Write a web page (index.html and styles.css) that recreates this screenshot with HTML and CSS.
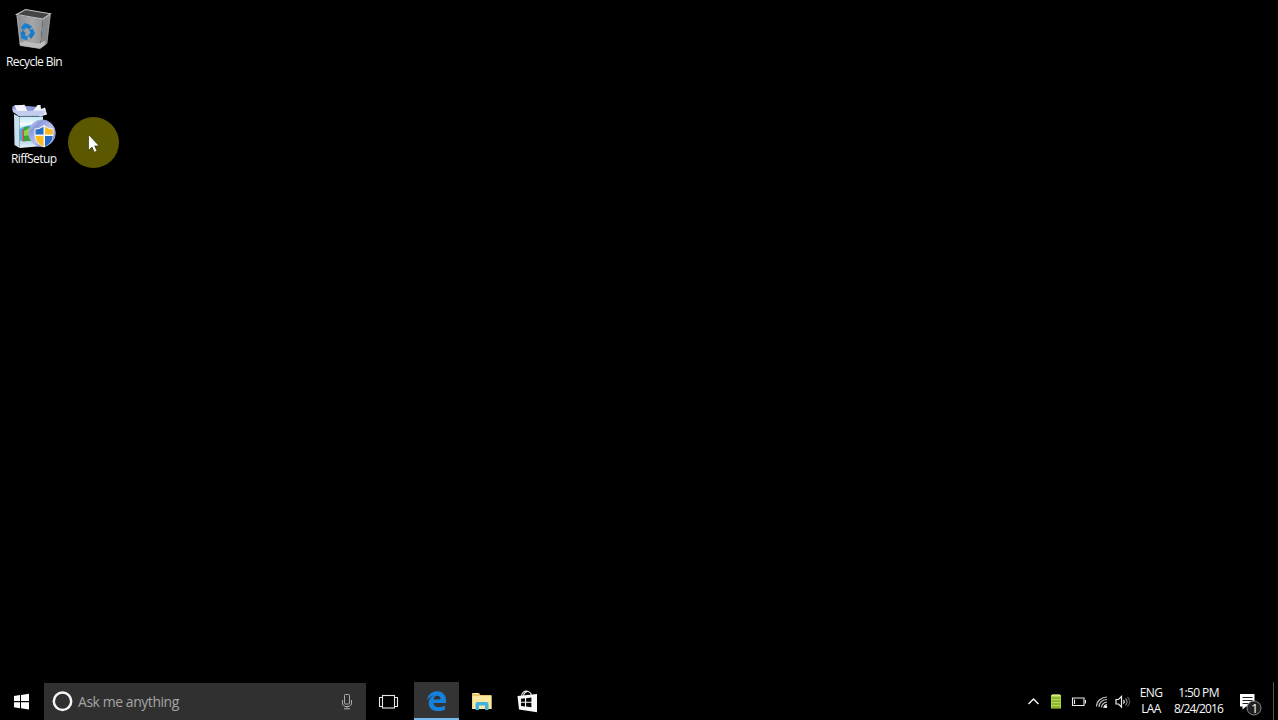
FILE: index.html
```html
<!DOCTYPE html>
<html lang="en">
<head>
<meta charset="utf-8">
<title>Desktop</title>
<link rel="stylesheet" href="styles.css">
</head>
<body>
<main class="desktop">
  <div class="shortcut recycle">
    <svg width="48" height="48" viewBox="10 4 48 48">
      <defs><linearGradient id="bin" x1="0" x2="1"><stop offset="0" stop-color="#8b8d91"/><stop offset=".6" stop-color="#a5a6a8"/><stop offset="1" stop-color="#919395"/></linearGradient></defs>
      <path d="M16.5 15 43 19l-3 29.5-20-3z" fill="url(#bin)"/>
      <path d="m43 19 7.500-5-3.600 29.500L40 48.500z" fill="#88898c"/>
      <path d="m19.500 43 6-2 8 2 6 .5 6-3-1 5-4.500 3-19.700-3z" fill="#bcbcbd"/>
      <path d="m16.500 14.500 9-5 25 4.300L43 19z" fill="#434446" stroke="#c4c5c7" stroke-width="1.100"/>
      <path d="m17 15.500 3.300 30 19.700 3 6.900-5 3.400-29" fill="none" stroke="#b4b5b7" stroke-width=".7"/>
      <g fill="none" stroke="#167fd0" stroke-width="4"><path d="m22.300 29 3-3.600 3.600 1.300"/><path d="m31 29.300 1.700 4-2.200 3"/><path d="m27.500 38.300-4.300-1.400-.5-4.500"/></g>
      <path d="m26.800 24.500 5.400 1.700-3.200 3.900zM33.800 33l-2.400 6-3.400-3.500zM20.300 33.700l2.600-3.800 3 4z" fill="#1879c2"/>
    </svg>
    <span class="label recycle-label">Recycle Bin</span>
  </div>
  <div class="shortcut setup">
    <svg width="50" height="52" viewBox="8 100 50 52">
      <defs>
        <linearGradient id="box" x2="0" y2="1"><stop stop-color="#bce7f8"/><stop offset=".25" stop-color="#f7fcff"/><stop offset=".55" stop-color="#70c5ec"/><stop offset="1" stop-color="#edf3f6"/></linearGradient>
        <linearGradient id="disc" x2="1" y2="1"><stop stop-color="#eef0ff"/><stop offset=".25" stop-color="#8b99da"/><stop offset=".55" stop-color="#bbc2ee"/><stop offset="1" stop-color="#4c5595"/></linearGradient>
      </defs>
      <path d="m12 107 3-2 24 2 5 5-4 4H18z" fill="#8b98d9"/>
      <path d="m14.500 105.500 10-.7 3 6.500H17zM33 111l4.500-6h3l.5 4 4-1.500 2 7-7 2z" fill="#f2f3fc"/>
      <path d="m12 108 6 3 28-.5-3 5-24 .5-6-4z" fill="#c3cdf0"/>
      <path d="m14 114 5.500 3v31l-5-3z" fill="#c6e0ef"/>
      <path d="M19.500 116.500H43V146l-23.500 2z" fill="url(#box)"/>
      <path d="M20 129c6-4 12-5 22-3v12l-22 3z" fill="#43aee4"/>
      <path d="M22.500 129h6v12l-6 .5z" fill="#e1492b"/><path d="M24 127h9v14h-9z" fill="#38a536"/><path d="m24 131 7-4v8l-7 1z" fill="#8bd348"/>
      <circle cx="42" cy="133.200" r="13.300" fill="url(#disc)" stroke="#a6afe0" stroke-width=".8"/>
      <path d="M34.500 128.500q5 0 9.700-3.500 4 3.500 9.300 3.500v6c0 6-4 10-9.500 13-6-3-9.500-7-9.500-13z" fill="#f2f5fa"/>
      <path d="M35.500 129.500q4 0 8-2.700v7.700h-8z" fill="#246fc5"/><path d="M45 126.800q4 2.700 7.800 2.700v5H45zM35.500 136h8v10.500c-5-2.500-7.600-6-8-10.500z" fill="#fbba20"/><path d="M45 136h7.800c-.4 4.500-3 8-7.800 10.500z" fill="#206cc6"/>
    </svg>
    <span class="label setup-label">RiffSetup</span>
  </div>
  <div class="pointer-spot">
    <svg width="52" height="52" viewBox="68 117 52 52"><path d="M88.500 134.500v15.800l3.500-3.300 2.300 5.200 2.700-1.200-2.300-5.100h4.500z" fill="#fff" stroke="#252500" stroke-width=".6"/></svg>
  </div>
</main>
<footer class="taskbar">
  <div class="start"><svg width="44" height="38" viewBox="0 682 44 38"><path d="m14 696 6-.9v6h-6zM21 695l8-1.200v7.300h-8zM14 702.200h6v6l-6-.9zM21 702.200h8v7.300l-8-1.200z" fill="#fff"/></svg></div>
  <div class="search">
    <svg width="34" height="37" viewBox="44 683 34 37"><circle cx="62.500" cy="701.300" r="8.700" fill="none" stroke="#f5f5f5" stroke-width="2.500"/></svg>
    <span class="prompt">Ask me anything</span>
    <svg class="mic" width="26" height="37" viewBox="334 683 26 37" fill="none" stroke="#aaa"><rect x="344.500" y="694.500" width="5" height="9.500" rx=".8"/><path d="M342.500 700v4.500l2.500 2h4l2.500-2V700M347 706.500v2M344 708.800h6"/></svg>
  </div>
  <div class="task-view"><svg width="48" height="38" viewBox="366 682 48 38" fill="none" stroke="#e5e5e5" stroke-width="1.100"><rect x="382.500" y="695.500" width="12" height="12.500"/><path d="M382 697.500h-2.500v9h2.500M395 697.500h2.500v9H395"/></svg></div>
  <div class="edge"><svg width="45" height="36" viewBox="414 682 45 36"><path d="M427 700.500c.8-5.700 4.600-9.200 10-9.200 6 0 9 4 9 9.300v2.300h-12.500c.4 3.200 3 4.100 5.700 4.100 2 0 4-.5 5.800-1.600v4.200c-2 1-4.400 1.500-7 1.500-5.700 0-9.300-3.100-9.300-7.900 0-3.300 1.900-6.200 5-7.600-2.700.5-5 2.300-6.700 4.900m6.600-1h6.900c0-2.400-1.100-3.700-3.300-3.700-2 0-3.400 1.400-3.600 3.700" fill="#1581dc" fill-rule="evenodd"/></svg></div>
  <div class="explorer"><svg width="46" height="38" viewBox="459 682 46 38"><path d="M472 693h7l1.500 2H491.500v14H472z" fill="#e6c76e"/><path d="M472.500 696h19v13h-19z" fill="#fae7a0"/><path d="M475.500 710v-6q0-2 2-2h9q2 0 2 2v6h-3.500v-4.500h-6v4.500z" fill="#43b2df"/><path d="M474 693.500h4" stroke="#fff0b6"/></svg></div>
  <div class="store"><svg width="44" height="38" viewBox="505 682 44 38"><path d="m517.500 696 19.500-2v18.300l-18-2.800z" fill="#f8f8f8"/><path d="M521.500 697c0-4.500 3-6.500 6-5.800 2.600.6 3.700 2.300 4 4.300M523.500 696c.3-3 2.500-4.800 4.800-4.400" fill="none" stroke="#eee" stroke-width="1.100"/><path d="m521 698.800 4-.5v3.400h-4zM526.100 698.200l5.300-.7v4.200h-5.300zM521 702.700h4v3.700l-4-.5zM526.100 702.700h5.300v4.500l-5.300-.7z" fill="#080808"/></svg></div>
  <div class="tray">
    <svg width="114" height="38" viewBox="1022 682 114 38" fill="none" stroke="#eee" stroke-width="1.200">
      <path d="m1028.500 704 5-5 5 5" stroke-width="1.500"/>
      <path d="M1051 695h10v13.500h-10z" fill="#b6dc45" stroke="none"/><path d="M1051.500 698h9m-9 3h9m-9 3h9m-9 3h9" stroke="#597c20" stroke-width=".8"/><path d="M1052 695h8" stroke="#edffa0"/>
      <path d="M1072.500 698h11.500v7.500h-11.500zM1085.500 700v3.500M1074.500 699.500v4.500" stroke-width="1.100"/>
      <path d="M1096.500 706.500c0-5.500 5-9.500 10.500-9.500M1099 707c0-4.500 3.700-7.500 8-7.500M1101.500 707.500c0-3 2.500-5.300 5.500-5.300" stroke="#bbb"/><path d="M1104 708c0-2 1-3.300 3-3.500" stroke="#fff"/><circle cx="1106" cy="706.800" r="1.200" fill="#fff" stroke="none"/>
      <path d="M1116 699.500h2.500l3-3v10.500l-3-3h-2.500z"/><path d="M1123.500 700q1.500 1.800 0 3.700"/><path d="M1125.500 698.500q3 3.300 0 6.800" stroke="#888"/><path d="M1127.500 697q4.200 4.800 0 9.500" stroke="#555"/>
    </svg>
    <div class="language"><span class="eng">ENG</span><span class="laa">LAA</span></div>
    <div class="clock"><span class="time">1:50 PM</span><span class="date">8/24/2016</span></div>
    <div class="notifications">
      <svg width="37" height="38" viewBox="1231 682 37 38"><path d="M1240 694h14.500v12.500h-8.500l-3.500 3v-3h-2.500z" fill="#fff"/><path d="M1242.500 697.500h10m-10 3h10m-10 3h6" stroke="#222"/><circle cx="1254" cy="708" r="7" fill="#202020" stroke="#858585"/></svg>
      <span class="badge">1</span>
    </div>
    <div class="show-desktop"></div>
  </div>
</footer>
</body>
</html>
```

FILE: styles.css
```css
* { box-sizing: border-box; }
body { margin: 0; width: 1278px; height: 720px; display: flex; flex-direction: column; overflow: hidden; background: #000; color: #f7f7f7; font-family: "Open Sans", "Noto Sans", sans-serif; }
svg { display: block; flex: none; }
span { white-space: nowrap; }
.desktop { position: relative; flex: 1; }
.shortcut { position: absolute; }
.recycle { left: 10px; top: 4px; }
.setup { left: 8px; top: 100px; }
.label { position: absolute; font-size: 12px; line-height: 16px; text-shadow: 0 1px 2px #000; }
.recycle-label { left: -4px; top: 50px; letter-spacing: -.6px; }
.setup-label { left: 3px; top: 51px; letter-spacing: -.6px; }
.pointer-spot { position: absolute; left: 68px; top: 117px; width: 51px; height: 51px; border-radius: 50%; background: #5c5800; }
.taskbar { height: 38px; display: flex; background: #000; }
.start { width: 44px; }
.search { width: 322px; height: 37px; margin-top: 1px; background: #303030; display: flex; align-items: center; }
.prompt { color: #a5a5a5; font-size: 14px; line-height: 20px; letter-spacing: -.45px; }
.mic { margin-left: auto; margin-right: 6px; }
.edge { width: 45px; background: #343434; border-bottom: 2px solid #76b9ed; }
.tray { margin-left: auto; display: flex; }
.language, .clock { display: flex; flex-direction: column; padding-top: 3px; align-items: center; font-size: 12px; line-height: 16px; }
.language { width: 30px; }
.clock { width: 65px; }
.eng, .laa { letter-spacing: -.6px; }
.time { letter-spacing: -.6px; }
.date { letter-spacing: -.85px; }
.notifications { width: 37px; position: relative; }
.badge { position: absolute; left: 20px; top: 18px; font-size: 13px; line-height: 16px; color: #fff; }
.show-desktop { width: 5px; margin-left: 5px; border-left: 1px solid #555; }
.tray { margin-right: 0; }
.tray > svg { margin-left: 0; }
```
